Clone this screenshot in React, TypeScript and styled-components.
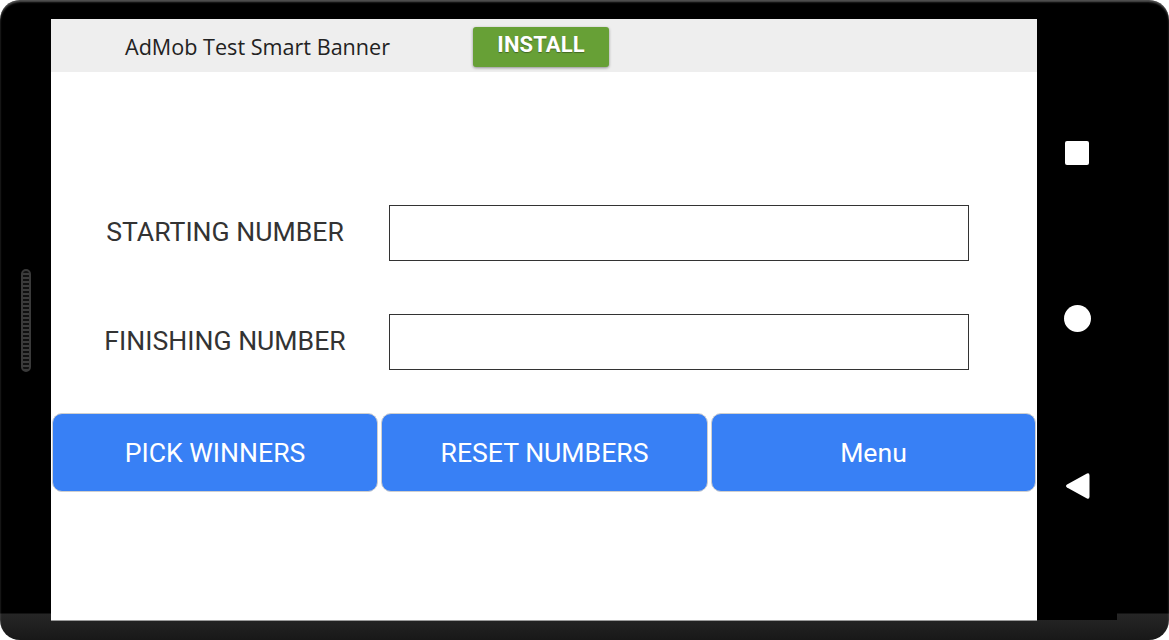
import React from "react";
import styled, { createGlobalStyle } from "styled-components";

const GlobalStyle = createGlobalStyle`
  html, body { margin: 0; padding: 0; background: #ffffff; }
  body { width: 1169px; height: 640px; overflow: hidden; }
  * { box-sizing: border-box; }
`;

const Device = styled.div`
  width: 1169px;
  height: 640px;
  display: flex;
  border-radius: 20px;
  background: linear-gradient(to bottom, #000 0, #000 613px, #262626 614px, #181818 640px);
  box-shadow: inset 0 2px 2px rgba(255, 255, 255, 0.32);
  overflow: hidden;
`;

const LeftBezel = styled.div`
  width: 51px;
  height: 640px;
  display: flex;
  align-items: center;
  justify-content: center;
`;

const SideKey = styled.div`
  width: 10px;
  height: 103px;
  border-radius: 5px;
  border: 2px solid #3a3a3a;
  background: repeating-linear-gradient(
    to bottom,
    #111 0,
    #111 2px,
    #3c3c3c 2px,
    #3c3c3c 4px
  );
`;

const Screen = styled.div`
  width: 986px;
  height: 601px;
  margin-top: 19px;
  background: #ffffff;
  box-shadow: 0 1px 0 #9a9a9a;
  display: flex;
  flex-direction: column;
`;

const AdBanner = styled.div`
  height: 53px;
  background: #eeeeee;
  display: flex;
  align-items: center;
  padding-left: 74px;
`;

const AdTitle = styled.span`
  font-family: "Open Sans", sans-serif;
  font-size: 21.6px;
  color: #222;
  width: 348px;
  margin-top: 1px;
  white-space: nowrap;
`;

const InstallButton = styled.button`
  width: 136px;
  height: 40px;
  margin-top: 3px;
  border: none;
  border-radius: 3px;
  background: #67a036;
  color: #fff;
  font-family: Roboto, sans-serif;
  font-weight: 700;
  font-size: 22px;
  letter-spacing: 0.1px;
  text-shadow: 0 1px 1px rgba(0, 0, 0, 0.35);
  box-shadow: 0 1px 3px rgba(0, 0, 0, 0.4);
  padding: 0 0 6px;
`;

const Form = styled.div`
  margin-top: 133px;
  display: flex;
  flex-direction: column;
  gap: 53px;
`;

const FieldRow = styled.div`
  display: flex;
  align-items: center;
  height: 56px;
`;

const FieldLabel = styled.label`
  width: 250px;
  margin-left: 49px;
  margin-right: 39px;
  padding-bottom: 4px;
  text-align: center;
  white-space: nowrap;
  font-family: Roboto, sans-serif;
  font-size: 26.6px;
  color: #333;
`;

const NumberInput = styled.input`
  width: 580px;
  height: 56px;
  border: 1.5px solid #333;
  background: #fff;
  outline: none;
  font-family: Roboto, sans-serif;
  font-size: 22px;
  padding: 0 10px;
`;

const ButtonRow = styled.div`
  margin-top: 43px;
  display: grid;
  grid-template-columns: 326px 327px 325px;
  gap: 3px;
  padding-left: 1px;
`;

const ActionButton = styled.button`
  height: 79px;
  border: 1px solid #cfcfcf;
  border-radius: 10px;
  background: #3880f5;
  color: #fff;
  font-family: Roboto, sans-serif;
  font-size: 26.6px;
  cursor: pointer;
`;

const NavBar = styled.div`
  width: 80px;
  height: 601px;
  margin-top: 19px;
  background: #000;
  display: flex;
  flex-direction: column;
  align-items: center;
  justify-content: center;
  gap: 140px;
  padding-top: 1px;
`;

const RecentKey = styled.div`
  width: 24px;
  height: 24px;
  border-radius: 2px;
  background: #fff;
`;

const HomeKey = styled.div`
  width: 27px;
  height: 27px;
  border-radius: 50%;
  background: #fff;
`;

const BackKey = () => (
  <svg width="25" height="28" viewBox="0 0 25 28">
    <path
      d="M22 1.5 Q24.5 0.5 24.5 3.5 L24.5 24.5 Q24.5 27.5 22 26.5 L2 15.5 Q0 14 2 12.5 Z"
      fill="#fff"
    />
  </svg>
);

export default function App() {
  return (
    <>
      <GlobalStyle />
      <Device>
        <LeftBezel>
          <SideKey />
        </LeftBezel>
        <Screen>
          <AdBanner>
            <AdTitle>AdMob Test Smart Banner</AdTitle>
            <InstallButton>INSTALL</InstallButton>
          </AdBanner>
          <Form>
            <FieldRow>
              <FieldLabel>STARTING NUMBER</FieldLabel>
              <NumberInput type="text" />
            </FieldRow>
            <FieldRow>
              <FieldLabel>FINISHING NUMBER</FieldLabel>
              <NumberInput type="text" />
            </FieldRow>
          </Form>
          <ButtonRow>
            <ActionButton>PICK WINNERS</ActionButton>
            <ActionButton>RESET NUMBERS</ActionButton>
            <ActionButton>Menu</ActionButton>
          </ButtonRow>
        </Screen>
        <NavBar>
          <RecentKey />
          <HomeKey />
          <BackKey />
        </NavBar>
      </Device>
    </>
  );
}
